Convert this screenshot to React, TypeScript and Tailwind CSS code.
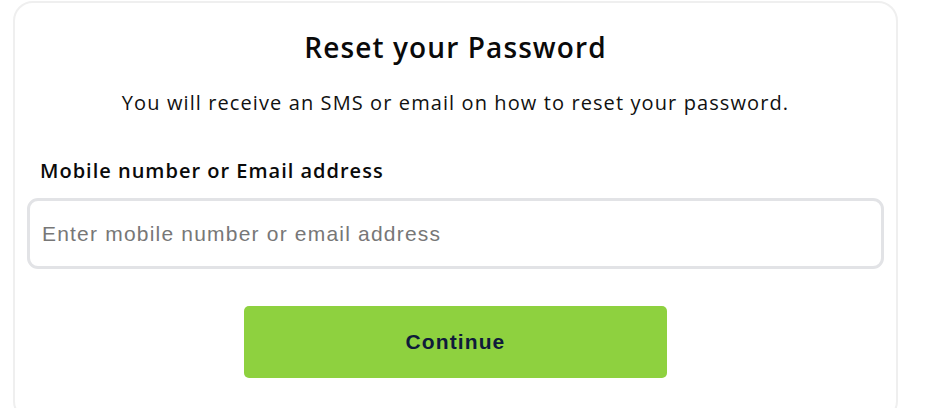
export default function App() {
  return (
    <div className="w-[927px] h-[408px] bg-white overflow-hidden">
      <div className="ml-[13px] mt-px w-[885px] h-[420px] border-2 border-[#efefef] rounded-[20px] px-[12px] pt-[26px] flex flex-col font-['Open_Sans',sans-serif]">
        <h1 className="text-center text-[28px] leading-[36px] font-semibold text-[#0a0a0a] tracking-[1.1px]">
          Reset your Password
        </h1>
        <p className="mt-[24px] text-center text-[20px] leading-[28px] text-[#111] tracking-[1.1px]">
          You will receive an SMS or email on how to reset your password.
        </p>
        <label className="mt-[40px] ml-[13px] text-[20px] leading-[28px] font-semibold text-[#0a0a0a] tracking-[1px]">
          Mobile number or Email address
        </label>
        <input
          placeholder="Enter mobile number or email address"
          className="mt-[13px] h-[71px] w-full border-[3px] border-[#e2e3e6] rounded-[11px] px-[12px] text-[21px] font-['Liberation_Sans',Arial,sans-serif] tracking-[1.2px] text-[#222] placeholder:text-[#777] outline-none"
        />
        <button className="mt-[37px] mx-auto w-[423px] h-[72px] bg-[#8ed13f] rounded-[5px] text-[21px] font-bold text-[#0f1a3a] tracking-[1.1px] font-['Liberation_Sans',Arial,sans-serif]">
          Continue
        </button>
      </div>
    </div>
  );
}
